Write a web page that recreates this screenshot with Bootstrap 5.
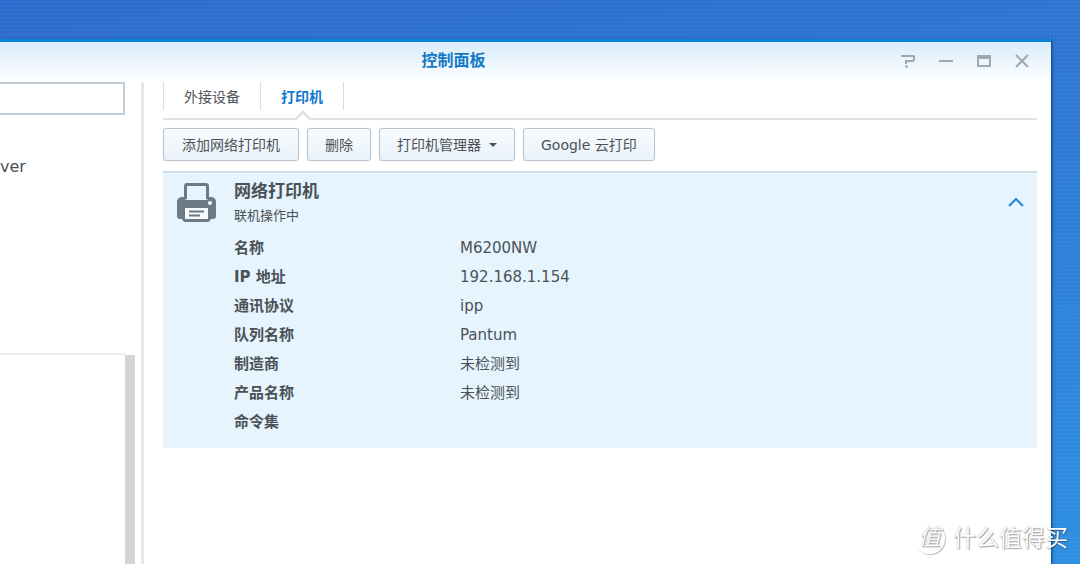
<!DOCTYPE html>
<html lang="zh-CN">
<head>
<meta charset="utf-8">
<meta name="viewport" content="width=device-width, initial-scale=1">
<title>控制面板</title>
<link href="https://cdn.jsdelivr.net/npm/bootstrap@5.3.0/dist/css/bootstrap.min.css" rel="stylesheet">
<style>
body{font-family:"DejaVu Sans","Noto Sans CJK SC",sans-serif;font-size:15px;line-height:20px;color:#4b5257;
  background:radial-gradient(#ffffff0b 1px,transparent 1px) 0 0/4px 4px,linear-gradient(170deg,#2c6cce 0%,#2f76d2 30%,#2e90e2 100%)}
.app-window{margin:39px 29px 0 0;background:#fff;border-top:3px solid #0b83d9;box-shadow:1px 1px 3px #103e70}
.title-bar{height:40px;background:linear-gradient(#d8ecfb,#fff);padding:0 10px 2px 18px}
.title-bar h1{font-size:16px;line-height:20px;color:#1479c4}
.win-btn{width:38px;height:30px;color:#9da9b2}
.sidebar{width:144px;border-right:3px solid #e5e6e7}
.search-box{width:125px;height:33px;border:2px solid #c2ced7;border-left:0;background:#fff}
.side-item{color:#4b5257;font-size:16px;height:32px;line-height:32px;margin-top:36px}
.side-rule{width:125px;height:2px;background:#ededee;margin-top:170px}
.side-scroll{width:10px;margin-left:125px;background:#d3d4d6}
.main-pane{padding:0 14px 0 19px}
.tab-strip{height:38px;border-bottom:2px solid #e1e1e1}
.tab-strip a{height:28px;line-height:30px;padding:0 20px;font-size:14px;color:#4b5257;border-right:1px solid #d8dde1;text-decoration:none}
.tab-strip li:first-child a{border-left:1px solid #d8dde1}
.tab-strip a.active{color:#0f79d0}
.notch{position:absolute;left:50%;top:28px;margin-left:-8px}
.tool-row{padding:8px 0 10px}
.tool-btn{--bs-btn-font-size:14px;--bs-btn-line-height:20px;--bs-btn-padding-x:17px;--bs-btn-padding-y:5px;--bs-btn-border-radius:3px;--bs-btn-color:#4b5257;
  height:33px;border:1px solid #b9c6d1;background:linear-gradient(#f9fbfe,#e9f2f9);box-shadow:0 0 1px #b9c6d1}
.wide{min-width:136px}
.caret{border:4px solid transparent;border-top-color:#4b5257;border-bottom:0}
.device{background:#e6f4fe;border-top:2px solid #cfdfeb;padding:7px 13px 11px 14px}
.device-icon{margin-top:2px}
.device-text{margin-left:18px}
.device h2{font-size:17px;line-height:22px}
.device-state{font-size:13px;line-height:20px;margin-top:4px}
.props{margin:8px 0 0 57px}
.props th,.props td{height:29px;line-height:29px;padding:0}
.props th{width:226px}
.collapse-btn{color:#2489d0;margin:14px 0 0}
.watermark{right:12px;bottom:10px;color:#fff;font-size:23px;line-height:32px;text-shadow:0 0 1px #0006,1px 1px 1px #0005}
.seal{width:31px;height:31px;border:1px solid #fff;border-radius:50%;box-shadow:1px 1px 1px #0004;font-size:22px;line-height:28px;font-style:italic;text-align:center}
</style>
</head>
<body class="vh-100 d-flex flex-column overflow-hidden position-relative">
<main class="app-window flex-grow-1 d-flex flex-column">
  <header class="title-bar d-flex align-items-center flex-shrink-0">
    <h1 class="flex-grow-1 text-center fw-bold m-0">控制面板</h1>
    <button type="button" class="win-btn border-0 bg-transparent p-0 d-flex align-items-center justify-content-center" aria-label="帮助"><svg width="14" height="14" fill="none" stroke="currentColor" stroke-width="2"><path d="M0 2h12.500l.5.500V6l-1 1H5v3M4 12.500h3"/></svg></button>
    <button type="button" class="win-btn border-0 bg-transparent p-0 d-flex align-items-center justify-content-center" aria-label="最小化"><svg width="14" height="14" fill="none" stroke="currentColor" stroke-width="2"><path d="M0 7h14"/></svg></button>
    <button type="button" class="win-btn border-0 bg-transparent p-0 d-flex align-items-center justify-content-center" aria-label="最大化"><svg width="14" height="14" fill="none" stroke="currentColor" stroke-width="2"><path d="M1 2h12v10H1zM1 4h12"/></svg></button>
    <button type="button" class="win-btn border-0 bg-transparent p-0 d-flex align-items-center justify-content-center" aria-label="关闭"><svg width="14" height="14" fill="none" stroke="currentColor" stroke-width="2"><path d="M1 1l12 12M13 1L1 13"/></svg></button>
  </header>
  <div class="d-flex flex-grow-1">
    <aside class="sidebar d-flex flex-column flex-shrink-0">
      <input type="search" class="search-box" aria-label="搜索">
      <a href="#" class="side-item text-decoration-none">ver</a>
      <div class="side-rule"></div>
      <div class="side-scroll flex-grow-1"></div>
    </aside>
    <section class="main-pane flex-grow-1">
      <ul class="tab-strip nav">
        <li><a href="#" class="d-block">外接设备</a></li>
        <li class="position-relative"><a href="#" class="d-block active fw-bold" aria-current="page">打印机</a>
          <svg class="notch" width="16" height="10"><path d="M0 10L8 2l8 8z" fill="#fff"/><path d="M0 9h1l7-7 7 7h1" fill="none" stroke="#dcdcdc" stroke-width="2"/></svg></li>
      </ul>
      <div class="d-flex gap-2 tool-row">
        <button type="button" class="btn tool-btn wide">添加网络打印机</button>
        <button type="button" class="btn tool-btn">删除</button>
        <button type="button" class="btn tool-btn wide d-flex align-items-center justify-content-center gap-2">打印机管理器<span class="caret"></span></button>
        <button type="button" class="btn tool-btn">Google 云打印</button>
      </div>
      <article class="device">
        <div class="d-flex align-items-start">
          <svg class="device-icon flex-shrink-0" width="39" height="40" viewBox="0 0 39 40"><path d="M8.500 17V4q0-1.500 1.500-1.500h19Q30.500 2.500 30.500 4v13" fill="none" stroke="#6c7a86" stroke-width="3"/><path d="M4 15h3l2 3h21l2-3h3q4 1 4 5v14q0 3-3 3h-2q-1 3-3 3H8q-2 0-3-3H3q-3 0-3-3V20q0-4 4-5z" fill="#6c7a86"/><circle cx="33" cy="21" r="2" fill="#fff"/><path d="M8 26h23v11H8z" fill="#f5faff"/><path d="M12 29.500h15M12 33.500h11" stroke="#6c7a86" stroke-width="2"/></svg>
          <div class="device-text flex-grow-1">
            <h2 class="fw-bold m-0">网络打印机</h2>
            <p class="device-state mb-0">联机操作中</p>
          </div>
          <button type="button" class="collapse-btn border-0 bg-transparent p-0" aria-label="收起"><svg class="d-block" width="16" height="16" fill="none" stroke="currentColor" stroke-width="2"><path d="M1 12l7-7 7 7"/></svg></button>
        </div>
        <table class="props">
          <tr><th scope="row">名称</th><td>M6200NW</td></tr>
          <tr><th scope="row">IP 地址</th><td>192.168.1.154</td></tr>
          <tr><th scope="row">通讯协议</th><td>ipp</td></tr>
          <tr><th scope="row">队列名称</th><td>Pantum</td></tr>
          <tr><th scope="row">制造商</th><td>未检测到</td></tr>
          <tr><th scope="row">产品名称</th><td>未检测到</td></tr>
          <tr><th scope="row">命令集</th><td></td></tr>
        </table>
      </article>
    </section>
  </div>
</main>
<div class="watermark position-absolute d-flex align-items-center gap-2"><span class="seal">值</span><span>什么值得买</span></div>
<script src="https://cdn.jsdelivr.net/npm/bootstrap@5.3.0/dist/js/bootstrap.bundle.min.js"></script>
</body>
</html>
